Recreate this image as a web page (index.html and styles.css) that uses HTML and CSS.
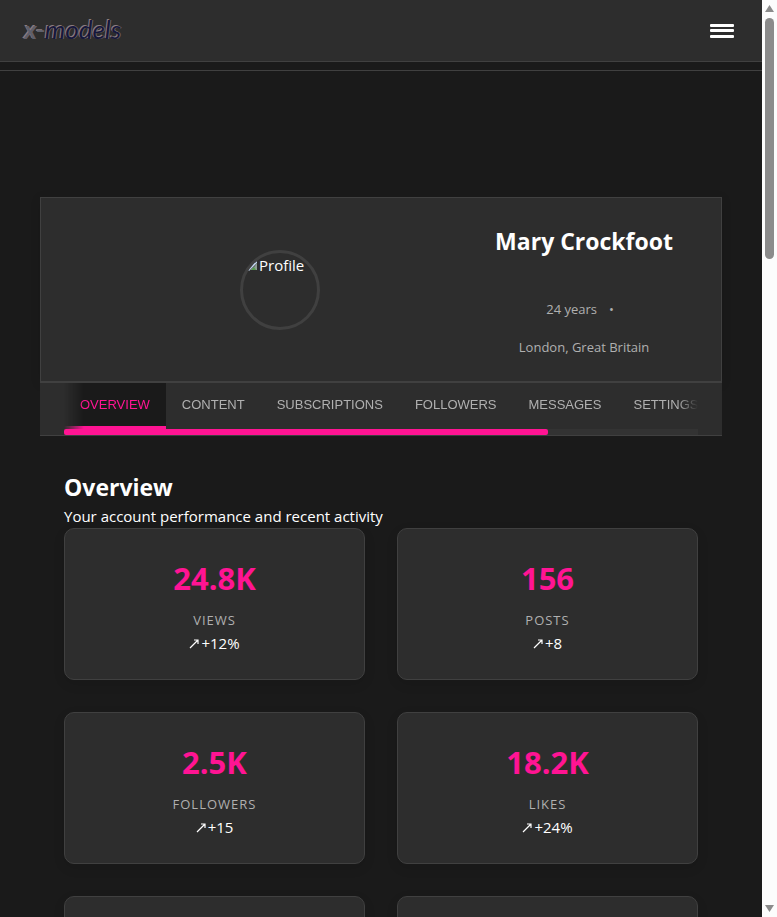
FILE: index.html
```html
<!DOCTYPE html>
<html lang="en">
<head>
<meta charset="utf-8">
<meta name="viewport" content="width=device-width, initial-scale=1">
<title>x-models – Mary Crockfoot</title>
<link rel="stylesheet" href="styles.css">
</head>
<body>
<div class="page">
  <header class="topbar">
    <a class="logo" href="#"><span class="logo-x">x-</span>models</a>
    <button class="menu" type="button" aria-label="Menu">
      <svg width="24" height="14" viewBox="0 0 24 14" fill="#fff" aria-hidden="true"><rect width="24" height="3" rx="1"/><rect y="5" width="24" height="3" rx="1"/><rect y="11" width="24" height="3" rx="1"/></svg>
    </button>
  </header>
  <div class="subbar"></div>
  <main class="main">
    <section class="hero">
      <div class="avatar-cell">
        <div class="avatar">
          <svg width="16" height="16" viewBox="0 0 16 16" aria-hidden="true"><path d="M3 14 14 3v3L6 14z" fill="#c3d5ef"/><path d="M1 14 9 7l-5 7z" fill="#4f9a46"/><path d="M7 13l4-3 3-4v7z" fill="#8b9b91"/><path d="M8 13l3-3 2 3z" fill="#549a4c"/></svg><span>Profile</span>
        </div>
      </div>
      <div class="info">
        <h1>Mary Crockfoot</h1>
        <p class="age"><span>24 years</span><span>•</span></p>
        <p>London, Great Britain</p>
      </div>
    </section>
    <nav class="tabs">
      <div class="tab-list">
        <button class="tab active" type="button">OVERVIEW</button>
        <button class="tab" type="button">CONTENT</button>
        <button class="tab" type="button">SUBSCRIPTIONS</button>
        <button class="tab" type="button">FOLLOWERS</button>
        <button class="tab" type="button">MESSAGES</button>
        <button class="tab" type="button">SETTINGS</button>
      </div>
      <div class="track"><div class="thumb"></div></div>
    </nav>
    <section class="overview">
      <h2>Overview</h2>
      <p class="lead">Your account performance and recent activity</p>
      <div class="stats">
        <article class="card"><strong>24.8K</strong><span class="label">VIEWS</span><span class="trend"><svg class="arrow" width="11" height="10" viewBox="0 0 11 10" aria-hidden="true"><path d="M1 9 9 1M5 1h4v4"/></svg>+12%</span></article>
        <article class="card"><strong>156</strong><span class="label">POSTS</span><span class="trend"><svg class="arrow" width="11" height="10" viewBox="0 0 11 10" aria-hidden="true"><path d="M1 9 9 1M5 1h4v4"/></svg>+8</span></article>
        <article class="card"><strong>2.5K</strong><span class="label">FOLLOWERS</span><span class="trend"><svg class="arrow" width="11" height="10" viewBox="0 0 11 10" aria-hidden="true"><path d="M1 9 9 1M5 1h4v4"/></svg>+15</span></article>
        <article class="card"><strong>18.2K</strong><span class="label">LIKES</span><span class="trend"><svg class="arrow" width="11" height="10" viewBox="0 0 11 10" aria-hidden="true"><path d="M1 9 9 1M5 1h4v4"/></svg>+24%</span></article>
        <article class="card"></article>
        <article class="card"></article>
      </div>
    </section>
  </main>
</div>
<div class="scrollbar" aria-hidden="true">
  <svg width="9" height="7" viewBox="0 0 9 7"><path d="M4.500 0 9 7H0z"/></svg>
  <div class="scroll-track"><div class="scroll-thumb"></div></div>
  <svg width="9" height="7" viewBox="0 0 9 7"><path d="M4.500 7 9 0H0z"/></svg>
</div>
</body>
</html>
```
FILE: styles.css
```css
* { box-sizing: border-box; }
body {
  margin: 0;
  height: 100vh;
  display: flex;
  overflow: hidden;
  background: #1a1a1a;
  color: #fff;
  font: 15px/24px "Segoe UI", "Open Sans", "Noto Sans", sans-serif;
}
h1, h2, p { margin: 0; }
h1, h2 { font-size: 23px; font-weight: 700; }
.page { flex: 1; min-width: 0; overflow: hidden; }

.topbar {
  height: 62px;
  padding: 0 24px;
  display: flex;
  align-items: center;
  justify-content: space-between;
  background: #2d2d2d;
  border-bottom: 1px solid #404040;
}
.logo {
  font: italic 26px/32px Lato, sans-serif;
  color: #15173c;
  text-decoration: none;
  padding-bottom: 4px;
  text-shadow: -1px -1px 0 #8a7c80, 1px 0 0 #6d5f66;
}
.logo-x { color: #5c5f6c; }
.menu { padding: 4px; border: 0; background: none; display: flex; }
.subbar { height: 9px; border-bottom: 1px solid #404040; }

.main { padding: 126px 40px 0; }
.hero {
  display: flex;
  align-items: center;
  gap: 24px;
  padding: 16px 48px 15px;
  background: #2d2d2d;
  border: 1px solid #404040;
  box-shadow: 0 2px 10px rgba(0, 0, 0, .1);
}
.avatar-cell { flex: 1; display: flex; justify-content: center; }
.avatar {
  width: 80px;
  height: 80px;
  border: 3px solid #404040;
  border-radius: 50%;
  overflow: hidden;
  display: flex;
  align-items: flex-start;
}
.avatar svg { flex: none; margin-top: 4px; }
.info { padding-top: 8px; text-align: center; color: #b0b0b0; font-size: 13px; line-height: 38px; }
.info h1 { color: #fff; line-height: 38px; margin-bottom: 30px; }
.age { display: flex; justify-content: center; gap: 12px; padding-right: 8px; }

.tabs {
  padding: 0 24px;
  background: #2d2d2d;
  border: solid #404040;
  border-width: 1px 0;
}
.tab-list {
  display: flex;
  overflow: hidden;
  -webkit-mask-image: linear-gradient(90deg, transparent, #000 20px calc(100% - 20px), transparent);
  mask-image: linear-gradient(90deg, transparent, #000 20px calc(100% - 20px), transparent);
}
.tab {
  flex: none;
  height: 46px;
  padding: 0 16px;
  border: 0;
  border-bottom: 3px solid transparent;
  background: none;
  color: #b0b0b0;
  font: 13px/16px "Liberation Sans", Arial, sans-serif;
}
.tab.active { background: #1a1a1a; color: #ff1493; border-bottom-color: #ff1493; }
.track { height: 6px; background: #333; }
.thumb { width: 76.3%; height: 6px; border-radius: 2px; background: #ff1493; }

.overview { padding: 34px 24px 0; }
.overview h2 { line-height: 34px; }
.stats { display: grid; grid-template-columns: 1fr 1fr; gap: 32px; }
.card {
  min-height: 152px;
  padding: 24px;
  display: flex;
  flex-direction: column;
  align-items: center;
  background: #2d2d2d;
  border: 1px solid #404040;
  border-radius: 10px;
  box-shadow: 0 4px 12px rgba(0, 0, 0, .1);
}
.card strong { font-size: 31px; line-height: 50px; color: #ff1493; }
.label { margin-top: 5px; color: #b0b0b0; font-size: 13px; line-height: 24px; letter-spacing: 1px; }
.trend { line-height: 23px; }
.arrow { margin-right: 1px; fill: none; stroke: #fff; stroke-width: 1.2; }

.scrollbar {
  width: 15px;
  padding: 5px 0;
  display: flex;
  flex-direction: column;
  align-items: center;
  gap: 6px;
  background: #fcfcfc;
  fill: #8b8b8b;
}
.scrollbar svg { flex: none; }
.scroll-track { flex: 1; width: 9px; }
.scroll-thumb { height: 27.4%; border-radius: 5px; background: #8b8b8b; }
```
